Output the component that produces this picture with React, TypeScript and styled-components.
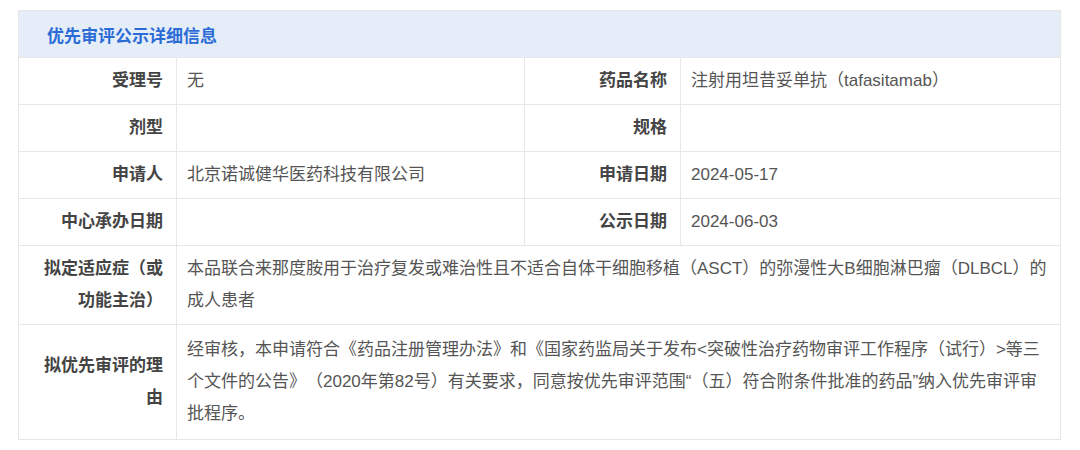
import styled, { createGlobalStyle } from "styled-components";

const GlobalStyle = createGlobalStyle`
  body {
    margin: 0;
    background: #ffffff;
    font-family: "Liberation Sans", "Noto Sans CJK SC", sans-serif;
    text-spacing-trim: space-all;
  }
`;

const Page = styled.div`
  padding: 10px 18px;
`;

const Panel = styled.div`
  width: 1043px;
  box-sizing: border-box;
  border: 1px solid #e6e6e6;
`;

const PanelHeader = styled.div`
  height: 46px;
  display: flex;
  align-items: center;
  padding-left: 28px;
  background-color: #e4edf8;
`;

const Title = styled.h2`
  margin: 0;
  font-size: 17px;
  font-weight: 700;
  color: #2b6bd6;
`;

const Table = styled.div`
  display: grid;
  grid-template-columns: 157px 348px 156px 1fr;
`;

const Label = styled.div<{ $first?: boolean }>`
  display: flex;
  align-items: center;
  justify-content: flex-end;
  text-align: right;
  padding: 7px 13px 7px 16px;
  min-height: 32px;
  line-height: 32px;
  font-size: 17px;
  font-weight: 700;
  color: #444444;
  border-top: 1px solid #e8e8e8;
  border-left: ${(p) => (p.$first ? "none" : "1px solid #e8e8e8")};
`;

const Value = styled.div<{ $span?: number; $roomy?: boolean }>`
  grid-column: span ${(p) => p.$span ?? 1};
  display: flex;
  align-items: center;
  padding: ${(p) => (p.$roomy ? "9px 10px" : "7px 10px")};
  min-height: 32px;
  line-height: 32px;
  font-size: 17px;
  color: #555555;
  border-top: 1px solid #e8e8e8;
  border-left: 1px solid #e8e8e8;
`;

type Pair = [string, string];

const pairs: [Pair, Pair][] = [
  [
    ["受理号", "无"],
    ["药品名称", "注射用坦昔妥单抗（tafasitamab）"],
  ],
  [
    ["剂型", ""],
    ["规格", ""],
  ],
  [
    ["申请人", "北京诺诚健华医药科技有限公司"],
    ["申请日期", "2024-05-17"],
  ],
  [
    ["中心承办日期", ""],
    ["公示日期", "2024-06-03"],
  ],
];

const wide: Pair[] = [
  [
    "拟定适应症（或功能主治）",
    "本品联合来那度胺用于治疗复发或难治性且不适合自体干细胞移植（ASCT）的弥漫性大B细胞淋巴瘤（DLBCL）的成人患者",
  ],
  [
    "拟优先审评的理由",
    "经审核，本申请符合《药品注册管理办法》和《国家药监局关于发布<突破性治疗药物审评工作程序（试行）>等三个文件的公告》（2020年第82号）有关要求，同意按优先审评范围“（五）符合附条件批准的药品”纳入优先审评审批程序。",
  ],
];

const App = () => {
  return (
    <Page>
      <GlobalStyle />
      <Panel>
        <PanelHeader>
          <Title>优先审评公示详细信息</Title>
        </PanelHeader>
        <Table>
          {pairs.map(([left, right]) => (
            <>
              <Label $first key={left[0]}>
                {left[0]}
              </Label>
              <Value key={left[0] + "-v"}>{left[1]}</Value>
              <Label key={right[0]}>{right[0]}</Label>
              <Value key={right[0] + "-v"}>{right[1]}</Value>
            </>
          ))}
          {wide.map(([label, text], i) => (
            <>
              <Label $first key={label}>
                {label}
              </Label>
              <Value $span={3} $roomy={i === 1} key={label + "-v"}>
                {text}
              </Value>
            </>
          ))}
        </Table>
      </Panel>
    </Page>
  );
};

export default App;
